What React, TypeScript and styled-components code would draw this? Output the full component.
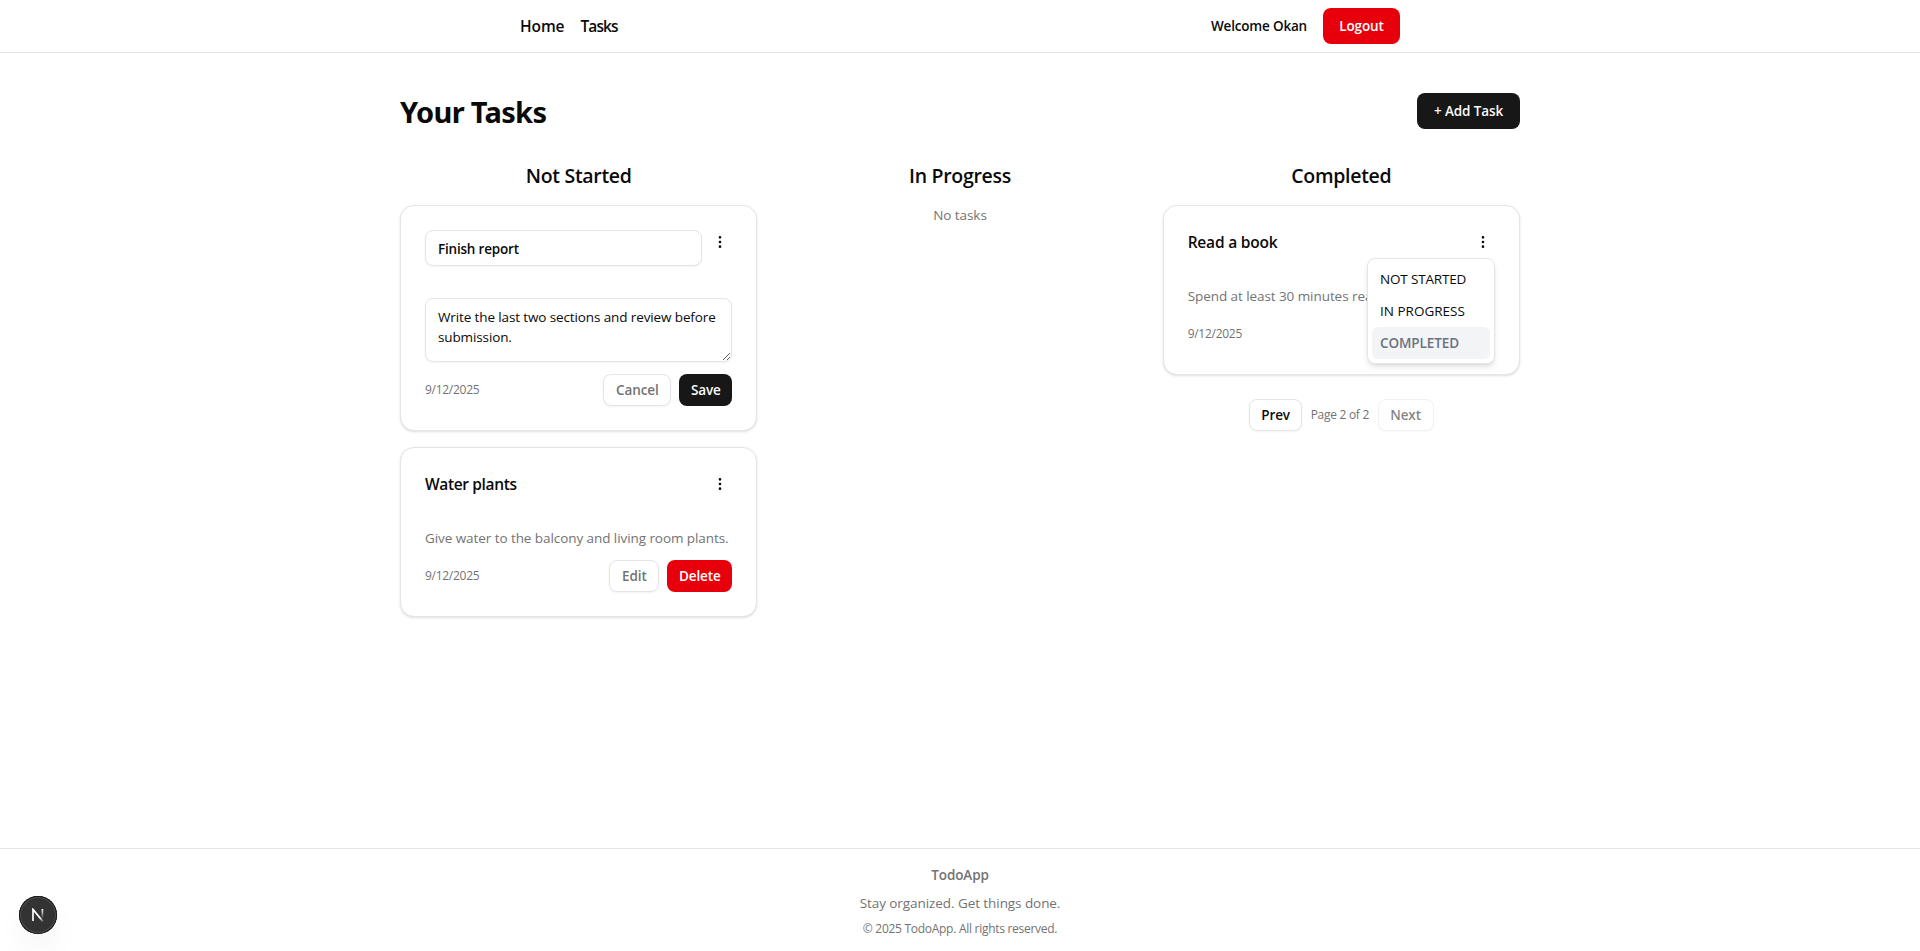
import React from "react";
import styled, { createGlobalStyle, css } from "styled-components";
import { MoreVertical } from "lucide-react";

const GlobalStyle = createGlobalStyle`
  *, *::before, *::after { box-sizing: border-box; }
  body {
    margin: 0;
    background: #fff;
    color: #0a0a0a;
    font-family: "Open Sans", "Noto Sans", sans-serif;
    font-size: 13.5px;
    line-height: 20px;
    letter-spacing: -0.07px;
  }
  h1, h2, h3, p { margin: 0; }
  button, input, textarea { font: inherit; letter-spacing: inherit; color: inherit; }
`;

const Page = styled.div`
  display: flex;
  flex-direction: column;
  height: 951px;
  overflow: hidden;
`;

const Header = styled.header`
  flex: none;
  height: 53px;
  border-bottom: 1px solid #e5e5e5;
`;

const HeaderInner = styled.div`
  display: flex;
  align-items: center;
  justify-content: space-between;
  width: 880px;
  height: 52px;
  margin: 0 auto;
`;

const Nav = styled.nav`
  display: flex;
  gap: 16px;
`;

const NavLink = styled.a<{ $track: number }>`
  font-size: 15.5px;
  line-height: 24px;
  font-weight: 600;
  letter-spacing: ${(p) => p.$track}px;
`;

const Account = styled.div`
  display: flex;
  align-items: center;
  gap: 16px;
`;

const Welcome = styled.span`
  font-weight: 600;
  letter-spacing: -0.18px;
`;

type Variant = "solid" | "danger" | "outline";

const variants = {
  solid: css`
    background: #171717;
    color: #fafafa;
  `,
  danger: css`
    background: #e7000b;
    color: #fff;
  `,
  outline: css`
    background: #fff;
    border: 1px solid #e5e5e5;
    box-shadow: 0 1px 2px rgba(0, 0, 0, 0.05);
  `,
};

const Button = styled.button<{ $variant: Variant; $width: number; $large?: boolean; $muted?: boolean }>`
  display: inline-flex;
  align-items: center;
  justify-content: center;
  width: ${(p) => p.$width}px;
  height: ${(p) => (p.$large ? 36 : 32)}px;
  padding: 0;
  border: 0;
  border-radius: 8px;
  font-weight: 600;
  letter-spacing: -0.1px;
  white-space: nowrap;
  ${(p) => variants[p.$variant]}
  ${(p) => p.$muted && css`color: #737373;`}
  &:disabled { opacity: 0.5; }
`;

const Main = styled.main`
  flex: 1;
  width: 1120px;
  margin: 0 auto;
  padding-top: 40px;
`;

const TitleRow = styled.div`
  display: flex;
  align-items: center;
  justify-content: space-between;
  margin-bottom: 32px;
`;

const Title = styled.h1`
  padding-top: 1px;
  font-family: "Noto Sans", sans-serif;
  font-size: 29px;
  line-height: 35px;
  font-weight: 700;
  letter-spacing: -0.68px;
`;

const Board = styled.div`
  display: grid;
  grid-template-columns: repeat(3, 1fr);
  gap: 24px;
`;

const Column = styled.section`
  display: flex;
  flex-direction: column;
  gap: 16px;
`;

const ColumnTitle = styled.h2`
  padding-top: 2px;
  font-size: 19.5px;
  line-height: 26px;
  font-weight: 600;
  letter-spacing: -0.3px;
  text-align: center;
`;

const Empty = styled.p`
  color: #737373;
  text-align: center;
`;

const Card = styled.article`
  display: flex;
  flex-direction: column;
  padding: 24px;
  border: 1px solid #e5e5e5;
  border-radius: 14px;
  background: #fff;
  box-shadow: 0 1px 3px rgba(0, 0, 0, 0.1), 0 1px 2px -1px rgba(0, 0, 0, 0.1);
`;

const CardHeader = styled.div`
  display: flex;
  align-items: flex-start;
  gap: 6px;
  margin-bottom: 32px;
`;

const CardTitle = styled.h3<{ $track: number }>`
  flex: 1;
  font-size: 15.5px;
  line-height: 24px;
  font-weight: 600;
  letter-spacing: ${(p) => p.$track}px;
`;

const MenuAnchor = styled.div`
  position: relative;
`;

const MenuButton = styled.button`
  display: flex;
  align-items: center;
  justify-content: center;
  width: 24px;
  height: 24px;
  padding: 0;
  border: 0;
  background: none;
  color: #0a0a0a;
`;

const Menu = styled.ul`
  position: absolute;
  top: 28px;
  right: 0;
  z-index: 1;
  width: 128px;
  margin: 0;
  padding: 4px;
  list-style: none;
  border: 1px solid #e5e5e5;
  border-radius: 8px;
  background: #fff;
  box-shadow: 0 4px 6px -1px rgba(0, 0, 0, 0.1), 0 2px 4px -2px rgba(0, 0, 0, 0.1);
`;

const MenuItem = styled.li<{ $current?: boolean; $track: number }>`
  padding: 6px 8px;
  border-radius: 6px;
  white-space: nowrap;
  letter-spacing: ${(p) => p.$track}px;
  ${(p) =>
    p.$current &&
    css`
      background: #f3f4f6;
      color: #6a7282;
      font-weight: 600;
    `}
`;

const TitleInput = styled.input`
  flex: 1;
  min-width: 0;
  height: 36px;
  padding: 6px 12px 4px;
  border: 1px solid #e5e5e5;
  border-radius: 8px;
  background: #fff;
  box-shadow: 0 1px 2px rgba(0, 0, 0, 0.05);
  font-weight: 600;
  letter-spacing: -0.2px;
  outline: none;
`;

const NotesInput = styled.textarea`
  display: block;
  width: 100%;
  height: 64px;
  padding: 8px 12px;
  border: 1px solid #e5e5e5;
  border-radius: 8px;
  background: #fff;
  box-shadow: 0 1px 2px rgba(0, 0, 0, 0.05);
  overflow: hidden;
  resize: vertical;
  outline: none;
  letter-spacing: -0.12px;
`;

const Notes = styled.p`
  color: #737373;
  white-space: nowrap;
`;

const CardFooter = styled.div`
  display: flex;
  align-items: center;
  justify-content: space-between;
  height: 32px;
  margin-top: 12px;
`;

const Small = styled.span`
  color: #737373;
  font-size: 12px;
  line-height: 16px;
  letter-spacing: -0.28px;
`;

const Actions = styled.div`
  display: flex;
  gap: 8px;
`;

const Pager = styled.div`
  display: flex;
  align-items: center;
  justify-content: center;
  gap: 8.5px;
  margin-top: 8px;
`;

const Footer = styled.footer`
  display: flex;
  flex: none;
  flex-direction: column;
  align-items: center;
  gap: 8px;
  height: 103px;
  padding-top: 16px;
  border-top: 1px solid #e5e5e5;
  color: #737373;
`;

const Brand = styled.p`
  font-weight: 600;
  letter-spacing: -0.12px;
`;

const DevBadge = styled.div`
  position: absolute;
  left: 19px;
  top: 896px;
  display: flex;
  align-items: center;
  justify-content: center;
  width: 38px;
  height: 38px;
  border-radius: 50%;
  background: #333;
  box-shadow: 0 0 0 1px #171717 inset, 0 0 0 2px #4d4d4d inset, 0 16px 32px -8px rgba(0, 0, 0, 0.12);
`;

function KebabButton() {
  return (
    <MenuButton aria-label="Change status">
      <MoreVertical size={16} />
    </MenuButton>
  );
}

function DevLogo() {
  return (
    <svg width="14" height="14" viewBox="0 0 14 14" fill="none">
      <defs>
        <linearGradient id="diag" x1="7" y1="7" x2="12.5" y2="13.5" gradientUnits="userSpaceOnUse">
          <stop offset="0.4" stopColor="#fff" />
          <stop offset="1" stopColor="#fff" stopOpacity="0.1" />
        </linearGradient>
        <linearGradient id="stem" x1="0" y1="1" x2="0" y2="11" gradientUnits="userSpaceOnUse">
          <stop stopColor="#fff" />
          <stop offset="1" stopColor="#fff" stopOpacity="0" />
        </linearGradient>
      </defs>
      <path d="M2 13V1.4L12 13.6" stroke="url(#diag)" strokeWidth="1.7" />
      <path d="M11.4 1V10.5" stroke="url(#stem)" strokeWidth="1.7" />
    </svg>
  );
}

export default function App() {
  return (
    <Page>
      <GlobalStyle />
      <Header>
        <HeaderInner>
          <Nav>
            <NavLink $track={-0.1}>Home</NavLink>
            <NavLink $track={-0.9}>Tasks</NavLink>
          </Nav>
          <Account>
            <Welcome>Welcome Okan</Welcome>
            <Button $variant="danger" $width={77} $large>Logout</Button>
          </Account>
        </HeaderInner>
      </Header>

      <Main>
        <TitleRow>
          <Title>Your Tasks</Title>
          <Button $variant="solid" $width={103} $large>+ Add Task</Button>
        </TitleRow>
        <Board>
          <Column>
            <ColumnTitle>Not Started</ColumnTitle>
            <Card>
              <CardHeader>
                <TitleInput defaultValue="Finish report" />
                <KebabButton />
              </CardHeader>
              <NotesInput defaultValue="Write the last two sections and review before submission." />
              <CardFooter>
                <Small>9/12/2025</Small>
                <Actions>
                  <Button $variant="outline" $width={68} $muted>Cancel</Button>
                  <Button $variant="solid" $width={53}>Save</Button>
                </Actions>
              </CardFooter>
            </Card>
            <Card>
              <CardHeader>
                <CardTitle $track={-0.35}>Water plants</CardTitle>
                <KebabButton />
              </CardHeader>
              <Notes>Give water to the balcony and living room plants.</Notes>
              <CardFooter>
                <Small>9/12/2025</Small>
                <Actions>
                  <Button $variant="outline" $width={50} $muted>Edit</Button>
                  <Button $variant="danger" $width={65}>Delete</Button>
                </Actions>
              </CardFooter>
            </Card>
          </Column>

          <Column>
            <ColumnTitle>In Progress</ColumnTitle>
            <Empty>No tasks</Empty>
          </Column>

          <Column>
            <ColumnTitle>Completed</ColumnTitle>
            <Card>
              <CardHeader>
                <CardTitle $track={-0.2}>Read a book</CardTitle>
                <MenuAnchor>
                  <KebabButton />
                  <Menu>
                    <MenuItem $track={-0.17}>NOT STARTED</MenuItem>
                    <MenuItem $track={0}>IN PROGRESS</MenuItem>
                    <MenuItem $track={-0.1} $current>COMPLETED</MenuItem>
                  </Menu>
                </MenuAnchor>
              </CardHeader>
              <Notes>Spend at least 30 minutes rea</Notes>
              <CardFooter>
                <Small>9/12/2025</Small>
              </CardFooter>
            </Card>
            <Pager>
              <Button $variant="outline" $width={53}>Prev</Button>
              <Small>Page 2 of 2</Small>
              <Button $variant="outline" $width={56} disabled>Next</Button>
            </Pager>
          </Column>
        </Board>
      </Main>

      <Footer>
        <Brand>TodoApp</Brand>
        <p>Stay organized. Get things done.</p>
        <Small>© 2025 TodoApp. All rights reserved.</Small>
      </Footer>

      <DevBadge>
        <DevLogo />
      </DevBadge>
    </Page>
  );
}
